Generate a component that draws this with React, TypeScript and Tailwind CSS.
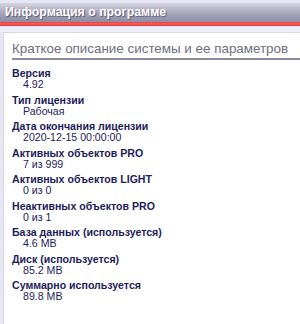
import React from 'react'

// Параметры системы
const items = [
  { label: 'Версия', value: '4.92' },
  { label: 'Тип лицензии', value: 'Рабочая' },
  { label: 'Дата окончания лицензии', value: '2020-12-15 00:00:00' },
  { label: 'Активных объектов PRO', value: '7 из 999' },
  { label: 'Активных объектов LIGHT', value: '0 из 0' },
  { label: 'Неактивных объектов PRO', value: '0 из 1' },
  { label: 'База данных (используется)', value: '4.6 MB' },
  { label: 'Диск (используется)', value: '85.2 MB' },
  { label: 'Суммарно используется', value: '89.8 MB' },
]

export default function App() {
  return (
    <div
      className="w-[300px] h-[324px] overflow-hidden flex flex-col bg-[#e6e6f5]"
      style={{ fontFamily: '"Liberation Sans", Arial, sans-serif' }}
    >
      {/* заголовок окна */}
      <div className="mt-[3px] h-[19px] flex items-center px-[5px] bg-gradient-to-b from-[#d4d4e2] via-[#a9a9bc] to-[#8c8ca3]">
        <span className="text-[12.3px] font-bold text-white [text-shadow:1px_1px_1px_rgba(60,60,90,0.7)]">
          Информация о программе
        </span>
      </div>
      <div className="h-[4px] bg-gradient-to-b from-[#e84848] via-[#ff5a5a] to-[#d83838]" />
      <div className="h-[6px] bg-[#eeeef8]" />

      {/* содержимое */}
      <div className="flex-1 ml-[3px] bg-white border-l border-t border-[#d8d8ea] pl-[8px] pt-[7px]">
        <div className="text-[13.4px] leading-[18px] text-[#6e6e82] border-b-2 border-[#8a8aa0] mb-[7px]">
          Краткое описание системы и ее параметров
        </div>
        <div className="flex flex-col gap-[3px]">
          {items.map((it) => (
            <div key={it.label}>
              <div className="text-[10.6px] leading-[12px] font-bold text-[#1c1c5a]">{it.label}</div>
              <div className="text-[10.6px] leading-[11.5px] text-[#1c1c5a] pl-[11px]">{it.value}</div>
            </div>
          ))}
        </div>
      </div>
    </div>
  )
}
